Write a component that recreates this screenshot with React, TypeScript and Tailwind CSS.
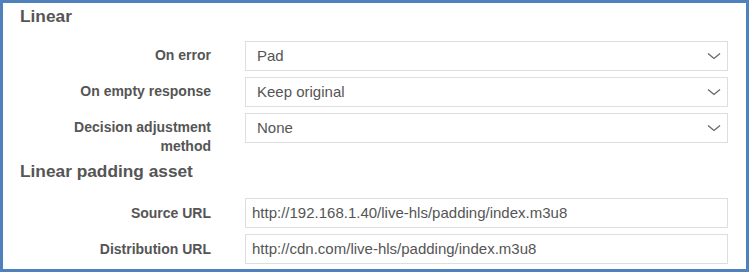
import React from 'react';

const font = { fontFamily: '"Liberation Sans", Arial, sans-serif' };

const Chevron = () => (
    <svg width="14" height="8" viewBox="0 0 14 8" className="shrink-0">
        <polyline points="1,1.5 7,6.5 13,1.5" fill="none" stroke="#666" strokeWidth="1.3" />
    </svg>
);

const SelectRow: React.FC<{ label: React.ReactNode; value: string }> = ({ label, value }) => (
    <div className="flex items-start">
        <div className="w-[208px] shrink-0 pt-[5px] text-right text-[14px] font-bold leading-[19px] text-[#555]">{label}</div>
        <div className="ml-[34px] flex h-[30px] flex-1 items-center justify-between border border-[#dedede] pl-[11px] pr-[6px] text-[15px] text-[#555]">
            <span>{value}</span>
            <Chevron />
        </div>
    </div>
);

const InputRow: React.FC<{ label: string; value: string }> = ({ label, value }) => (
    <div className="flex items-center">
        <div className="w-[208px] shrink-0 text-right text-[14px] font-bold leading-[19px] text-[#555]">{label}</div>
        <div className="ml-[34px] flex h-[30px] flex-1 items-center border border-[#dedede] pl-[6px] text-[15px] text-[#555]">
            {value}
        </div>
    </div>
);

export default function App() {
    return (
        <div style={font} className="box-border h-[272px] w-[749px] overflow-hidden border-[3px] border-[#4f81bd] bg-white pr-[18px]">
            <h2 className="mt-[3px] pl-[17px] text-[17.3px] font-bold leading-[20px] text-[#555]">Linear</h2>
            <div className="mt-[15px] flex flex-col gap-[6px]">
                <SelectRow label="On error" value="Pad" />
                <SelectRow label="On empty response" value="Keep original" />
                <SelectRow
                    label={
                        <>
                            Decision adjustment
                            <br />
                            method
                        </>
                    }
                    value="None"
                />
            </div>
            <h2 className="mt-[5px] pl-[17px] text-[17.3px] font-bold leading-[20px] text-[#555]">Linear padding asset</h2>
            <div className="mt-[17px] flex flex-col gap-[6px]">
                <InputRow label="Source URL" value="http://192.168.1.40/live-hls/padding/index.m3u8" />
                <InputRow label="Distribution URL" value="http://cdn.com/live-hls/padding/index.m3u8" />
            </div>
        </div>
    );
}
